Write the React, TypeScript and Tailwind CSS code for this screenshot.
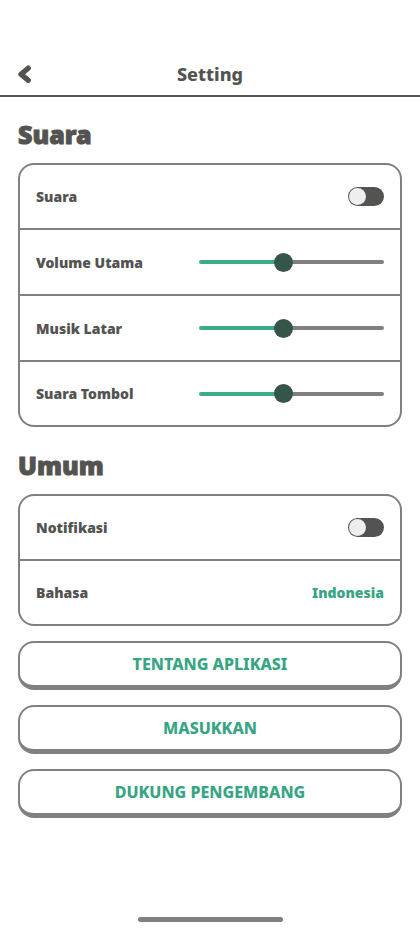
import { useId, useState, type ReactNode } from "react";

function Section({ title, children }: { title: string; children: ReactNode }) {
  return (
    <section>
      <h2 className="mb-[13px] text-[25px] leading-8 font-black [-webkit-text-stroke:1px_currentColor]">{title}</h2>
      <div className="rounded-2xl border-2 border-[#808080]">{children}</div>
    </section>
  );
}

const rowClass =
  "flex h-[66px] items-center justify-between border-b-2 border-[#808080] px-4 text-[14px] font-black first:h-[65px] last:h-[63px] last:border-b-0";

function ToggleRow({ label }: { label: string }) {
  const id = useId();
  const [on, setOn] = useState(false);
  return (
    <div className={rowClass}>
      <label htmlFor={id}>{label}</label>
      <input
        id={id}
        type="checkbox"
        role="switch"
        checked={on}
        onChange={(e) => setOn(e.target.checked)}
        className="flex h-[19px] w-9 appearance-none items-center rounded-full bg-[#535351] px-px before:size-[17px] before:rounded-full before:bg-[#eeeeee] checked:justify-end checked:bg-[#3cab8a]"
      />
    </div>
  );
}

function SliderRow({ label }: { label: string }) {
  const id = useId();
  const [value, setValue] = useState(45);
  return (
    <div className={rowClass}>
      <label htmlFor={id}>{label}</label>
      <input
        id={id}
        type="range"
        min={0}
        max={100}
        value={value}
        onChange={(e) => setValue(Number(e.target.value))}
        style={{ backgroundImage: `linear-gradient(to right, #3cab8a ${value}%, #808080 ${value}%)` }}
        className="h-1 w-[185px] appearance-none rounded-full [&::-webkit-slider-thumb]:size-[19px] [&::-webkit-slider-thumb]:appearance-none [&::-webkit-slider-thumb]:rounded-full [&::-webkit-slider-thumb]:bg-[#355549]"
      />
    </div>
  );
}

function ActionButton({ children }: { children: ReactNode }) {
  return (
    <button
      type="button"
      className="h-[49px] w-full rounded-2xl border-2 border-b-5 border-[#808080] text-base font-extrabold text-[#37a583]"
    >
      {children}
    </button>
  );
}

export default function App() {
  return (
    <div className="flex min-h-screen flex-col bg-white font-['Noto_Sans','Open_Sans',sans-serif] text-[#535351]">
      <header className="grid grid-cols-[1fr_auto_1fr] items-center border-b-2 border-[#535351] px-[18px] pt-[54px] pb-[1px]">
        <button type="button" aria-label="Kembali" className="flex h-10 w-10 items-center">
          <svg viewBox="0 0 13 18" className="h-[18px] w-[13px]" fill="none" aria-hidden="true">
            <path d="M10.2 3.2 3 9.2l7.2 6" stroke="currentColor" strokeWidth="5.4" strokeLinecap="round" strokeLinejoin="round" />
          </svg>
        </button>
        <h1 className="text-lg leading-10 font-extrabold">Setting</h1>
      </header>
      <main className="flex flex-col px-[18px] pt-[21px]">
        <div className="flex flex-col gap-[22px]">
          <Section title="Suara">
            <ToggleRow label="Suara" />
            <SliderRow label="Volume Utama" />
            <SliderRow label="Musik Latar" />
            <SliderRow label="Suara Tombol" />
          </Section>
          <Section title="Umum">
            <ToggleRow label="Notifikasi" />
            <div className={rowClass}>
              <label htmlFor="bahasa">Bahasa</label>
              <select id="bahasa" className="appearance-none text-right text-[#37a583]">
                <option>Indonesia</option>
              </select>
            </div>
          </Section>
        </div>
        <div className="mt-[15px] flex flex-col gap-[15px]">
          <ActionButton>TENTANG APLIKASI</ActionButton>
          <ActionButton>MASUKKAN</ActionButton>
          <ActionButton>DUKUNG PENGEMBANG</ActionButton>
        </div>
      </main>
      <div className="mx-auto mt-auto mb-[10px] h-[5px] w-[145px] rounded-full bg-[#808080]" aria-hidden="true" />
    </div>
  );
}
